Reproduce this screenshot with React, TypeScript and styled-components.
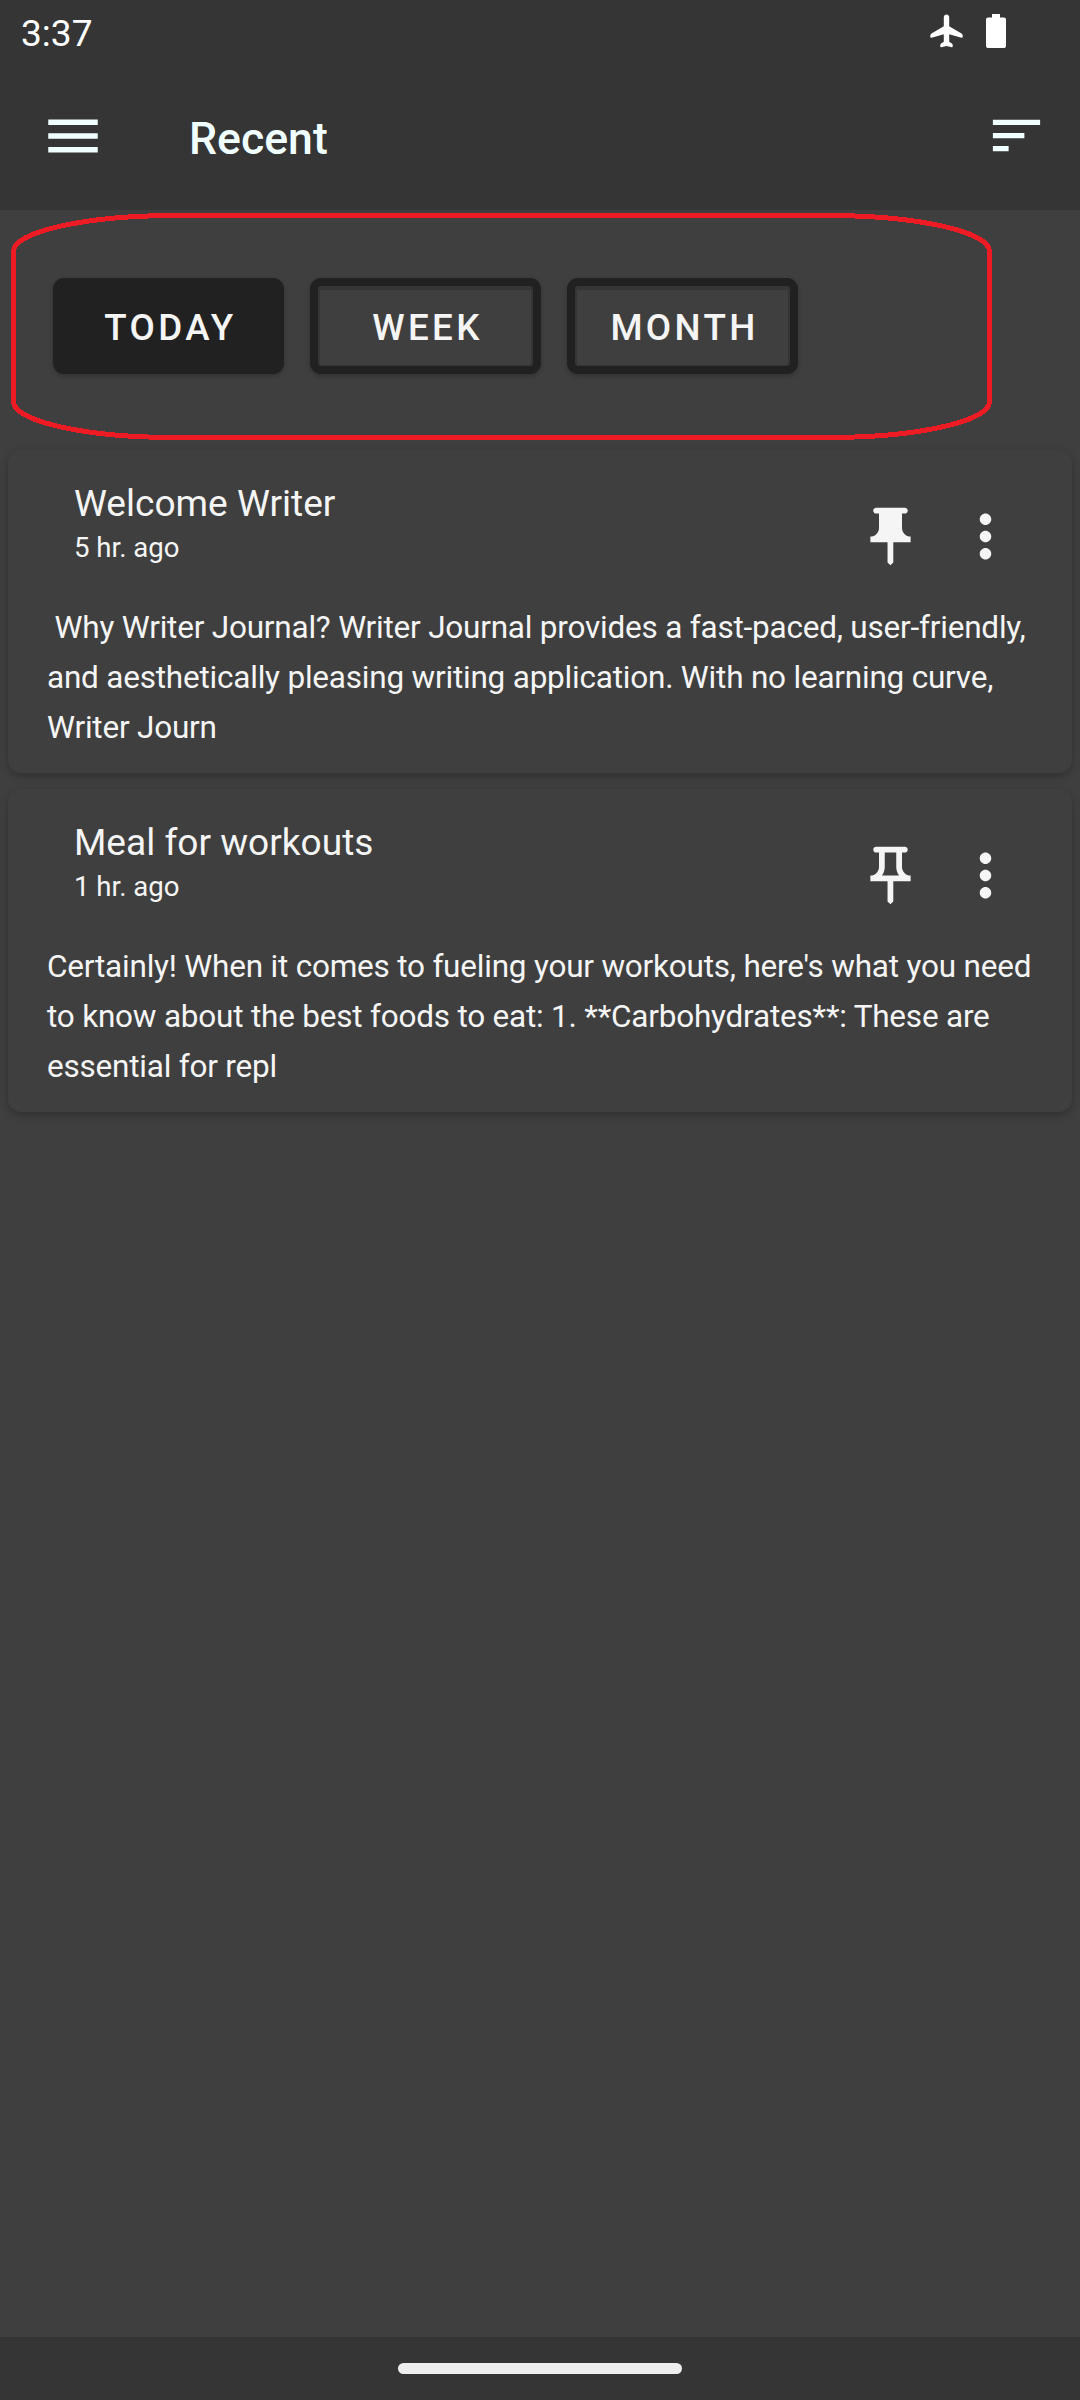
import React from "react";
import styled, { createGlobalStyle } from "styled-components";

const Global = createGlobalStyle`
  *, *::before, *::after { box-sizing: border-box; }
  html, body { margin: 0; padding: 0; background: #3f3f3f; }
  body { font-family: Roboto, "Noto Sans", sans-serif; color: #f5f5f5; }
  button { font: inherit; color: inherit; border: 0; background: none; padding: 0; margin: 0; }
  svg { display: block; flex: none; }
`;

const Screen = styled.div`
  position: relative;
  display: flex;
  flex-direction: column;
  width: 1080px;
  height: 2400px;
  overflow: hidden;
  background: #3f3f3f;
`;

const Header = styled.header`
  height: 210px;
  background: #353535;
`;

const StatusBar = styled.div`
  display: flex;
  align-items: center;
  justify-content: space-between;
  height: 63px;
  padding: 0 74px 1px 21px;
`;

const Clock = styled.span`
  margin-top: 5px;
  font-size: 37.1px;
  line-height: 44px;
  color: #ffffff;
`;

const StatusIcons = styled.div`
  display: flex;
  align-items: center;
  gap: 23.5px;
  color: #ffffff;
`;

const AppBar = styled.div`
  display: flex;
  align-items: center;
  height: 147px;
  padding: 0 32px 2px 40px;
  color: #f0ffff;
`;

const Title = styled.h1`
  flex: 1;
  margin: 7px 0 0 83px;
  font-size: 44.6px;
  font-weight: 500;
  line-height: 60px;
`;

const IconButton = styled.button`
  display: flex;
  align-items: center;
  justify-content: center;
`;

const MenuButton = styled(IconButton)`
  && {
    margin-top: 1px;
  }
`;

const Filters = styled.nav`
  display: flex;
  gap: 26px;
  height: 240px;
  padding: 68px 53px 76px;
`;

const FilterButton = styled.button<{ $active?: boolean }>`
  && {
    width: 231px;
    height: 96px;
    padding: 3px 0 0 4px;
    border: 8px solid #212121;
    border-radius: 11px;
    background: ${(p) => (p.$active ? "#212121" : "#3f3f3f")};
    box-shadow: 0 2px 5px rgba(0, 0, 0, 0.22)
      ${(p) => (p.$active ? "" : ", inset 0 4px 0 #353535, inset 2px 0 0 #353535, inset -2px -1px 0 #353535")};
    font-size: 36.75px;
    font-weight: 500;
    letter-spacing: 3.35px;
    line-height: 77px;
    text-align: center;
  }
`;

const NoteList = styled.main`
  display: flex;
  flex: 1;
  flex-direction: column;
  gap: 16px;
  padding: 0 8px;
`;

const NoteCard = styled.article`
  height: 323px;
  border-radius: 13px;
  background: #3f3f3f;
  box-shadow: 0 3px 8px rgba(0, 0, 0, 0.24);
`;

const NoteHead = styled.div`
  display: flex;
  height: 152.5px;
  padding: 32px 52px 0 66px;
`;

const NoteHeading = styled.div`
  flex: 1;
`;

const NoteTitle = styled.h2`
  margin: 0;
  font-size: 37.1px;
  font-weight: 400;
  line-height: 44px;
`;

const NoteTime = styled.div`
  font-size: 27.6px;
  line-height: 43px;
`;

const NoteActions = styled.div`
  display: flex;
  align-items: center;
  height: 109px;
  gap: 26px;
`;

const NoteBody = styled.p`
  margin: 0;
  padding-left: 39px;
  font-size: 31.5px;
  letter-spacing: -0.21px;
  line-height: 50px;
  white-space: pre;
`;

const GestureBar = styled.footer`
  display: flex;
  justify-content: center;
  height: 63px;
  padding-top: 26px;
  background: #353535;
`;

const GestureHandle = styled.div`
  width: 284px;
  height: 11px;
  border-radius: 5.5px;
  background: #eeeeee;
`;

const Highlight = styled.svg`
  position: absolute;
  top: 210px;
  left: 0;
  pointer-events: none;
`;

const PlaneIcon = () => (
  <svg width="33" height="34" viewBox="-0.5 0 33 34" fill="currentColor">
    <path d="M16 .5c1.500 0 2.700 1.200 2.700 2.700V12.300L31 19.500c.8.500 1.200 1.200 1.200 2v1.300c0 .7-.5 1.100-1.200.9L18.700 20.300v7.400l2.700 1.900c.5.400.8.900.8 1.500v1.500c0 .6-.4.900-1 .7L16 31.900l-5.200 1.400c-.6.200-1-.1-1-.7v-1.500c0-.6.3-1.100.8-1.500l2.700-1.900v-7.400L1 23.700c-.7.200-1.200-.2-1.200-.9v-1.300c0-.8.4-1.500 1.200-2l12.300-7.200V3.200C13.300 1.700 14.500.5 16 .5z" />
  </svg>
);

const BatteryIcon = () => (
  <svg width="20" height="34" viewBox="0 0 20 34" fill="currentColor">
    <path d="M6 0h8v3.500h4a2 2 0 0 1 2 2V32a2 2 0 0 1-2 2H2a2 2 0 0 1-2-2V5.500a2 2 0 0 1 2-2h4z" />
  </svg>
);

const MenuIcon = () => (
  <svg width="66" height="66" viewBox="0 0 24 24" fill="currentColor">
    <path d="M3 18h18v-2H3v2zm0-5h18v-2H3v2zm0-7v2h18V6H3z" />
  </svg>
);

const SortIcon = () => (
  <svg width="63" height="63" viewBox="0 0 24 24" fill="currentColor">
    <path d="M3 18h6v-2H3v2zM3 6v2h18V6H3zm0 7h12v-2H3v2z" />
  </svg>
);

const PinIcon = ({ filled }: { filled?: boolean }) => (
  <svg width="69" height="69" viewBox="0 0 24 24" fill="currentColor">
    {filled ? (
      <path d="M16 9V4h1c.55 0 1-.45 1-1s-.45-1-1-1H7c-.55 0-1 .45-1 1s.45 1 1 1h1v5c0 1.660-1.340 3-3 3v2h5.970v7l1 1 1-1v-7H19v-2c-1.660 0-3-1.340-3-3z" />
    ) : (
      <path d="M14 4v5c0 1.120.37 2.160 1 3H9c.65-.86 1-1.900 1-3V4h4m3-2H7c-.55 0-1 .45-1 1s.45 1 1 1h1v5c0 1.660-1.340 3-3 3v2h5.970v7l1 1 1-1v-7H19v-2c-1.660 0-3-1.340-3-3V4h1c.55 0 1-.45 1-1s-.45-1-1-1z" />
    )}
  </svg>
);

const MoreIcon = () => (
  <svg width="69" height="69" viewBox="0 0 24 24" fill="currentColor">
    <path d="M12 8c1.100 0 2-.9 2-2s-.9-2-2-2-2 .9-2 2 .9 2 2 2zm0 2c-1.100 0-2 .9-2 2s.9 2 2 2 2-.9 2-2-.9-2-2-2zm0 6c-1.100 0-2 .9-2 2s.9 2 2 2 2-.9 2-2-.9-2-2-2z" />
  </svg>
);

const notes = [
  {
    title: "Welcome Writer",
    time: "5 hr. ago",
    pinned: true,
    lines: [
      " Why Writer Journal? Writer Journal provides a fast-paced, user-friendly,",
      "and aesthetically pleasing writing application. With no learning curve,",
      "Writer Journ",
    ],
  },
  {
    title: "Meal for workouts",
    time: "1 hr. ago",
    pinned: false,
    lines: [
      "Certainly! When it comes to fueling your workouts, here's what you need",
      "to know about the best foods to eat: 1. **Carbohydrates**: These are",
      "essential for repl",
    ],
  },
];

export default function App() {
  return (
    <>
      <Global />
      <Screen>
        <Header>
          <StatusBar>
            <Clock>3:37</Clock>
            <StatusIcons>
              <PlaneIcon />
              <BatteryIcon />
            </StatusIcons>
          </StatusBar>
          <AppBar>
            <MenuButton aria-label="Menu">
              <MenuIcon />
            </MenuButton>
            <Title>Recent</Title>
            <IconButton aria-label="Sort">
              <SortIcon />
            </IconButton>
          </AppBar>
        </Header>
        <Filters>
          <FilterButton $active>TODAY</FilterButton>
          <FilterButton>WEEK</FilterButton>
          <FilterButton>MONTH</FilterButton>
        </Filters>
        <NoteList>
          {notes.map((note) => (
            <NoteCard key={note.title}>
              <NoteHead>
                <NoteHeading>
                  <NoteTitle>{note.title}</NoteTitle>
                  <NoteTime>{note.time}</NoteTime>
                </NoteHeading>
                <NoteActions>
                  <IconButton aria-label="Pin">
                    <PinIcon filled={note.pinned} />
                  </IconButton>
                  <IconButton aria-label="More">
                    <MoreIcon />
                  </IconButton>
                </NoteActions>
              </NoteHead>
              <NoteBody>{note.lines.join("\n")}</NoteBody>
            </NoteCard>
          ))}
        </NoteList>
        <GestureBar>
          <GestureHandle />
        </GestureBar>
        <Highlight width="1000" height="236" viewBox="0 0 1000 236" fill="none">
          <rect
            x="13.500"
            y="5.500"
            width="976"
            height="222"
            rx="162"
            ry="36"
            stroke="#ed1c24"
            strokeWidth="5"
            shapeRendering="crispEdges"
          />
        </Highlight>
      </Screen>
    </>
  );
}
